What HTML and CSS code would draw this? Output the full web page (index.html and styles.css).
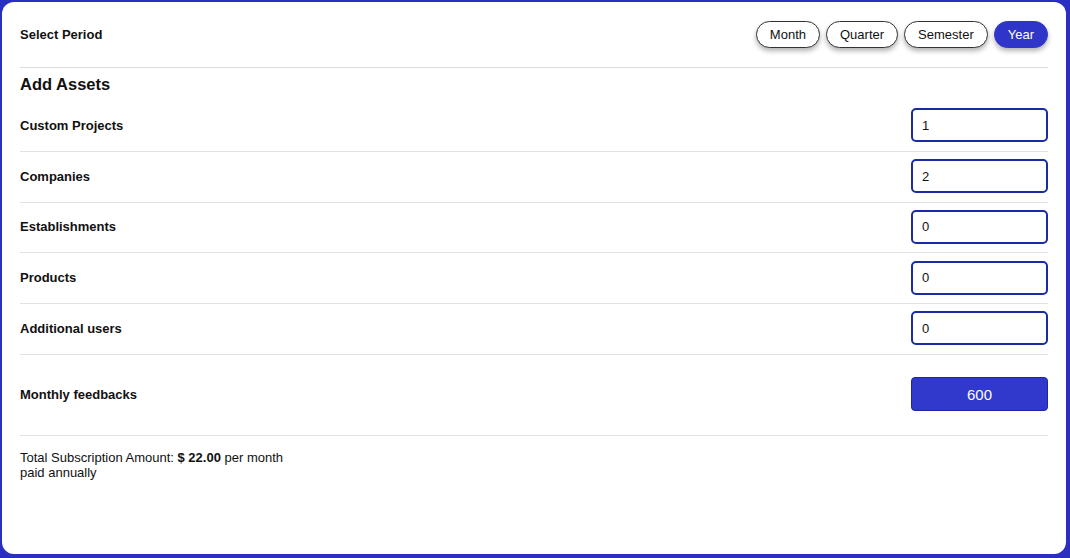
FILE: index.html
```html
<!DOCTYPE html>
<html>
<head>
<meta charset="utf-8">
<link rel="stylesheet" href="styles.css">
</head>
<body>
<div class="card">
  <div class="header">
    <div class="label">Select Period</div>
    <div class="periods">
      <button class="pill">Month</button>
      <button class="pill">Quarter</button>
      <button class="pill">Semester</button>
      <button class="pill active">Year</button>
    </div>
  </div>
  <div class="section-title">Add Assets</div>
  <div class="row"><div class="label">Custom Projects</div><input class="field" value="1"></div>
  <div class="row"><div class="label">Companies</div><input class="field" value="2"></div>
  <div class="row"><div class="label">Establishments</div><input class="field" value="0"></div>
  <div class="row"><div class="label">Products</div><input class="field" value="0"></div>
  <div class="row"><div class="label">Additional users</div><input class="field" value="0"></div>
  <div class="row feedback"><div class="label">Monthly feedbacks</div><button class="feedback-btn">600</button></div>
  <div class="total">Total Subscription Amount: <b>$ 22.00</b> per month<br>paid annually</div>
</div>
</body>
</html>
```
FILE: styles.css
```css
* { box-sizing: border-box; }
html, body { margin: 0; padding: 0; }
body {
  background: #2a2fc2;
  font-family: "Liberation Sans", Arial, sans-serif;
  color: #111;
  width: 1070px;
  height: 558px;
  overflow: hidden;
}
.card {
  margin: 2px 4px 0 2px;
  height: 552px;
  background: #fff;
  border-radius: 12px;
  padding: 0 18px;
}
.header {
  height: 66px;
  display: flex;
  align-items: center;
  justify-content: space-between;
  border-bottom: 1px solid #dcdcdc;
  padding-bottom: 1px;
}
.label {
  font-size: 13px;
  font-weight: bold;
}
.periods {
  display: flex;
  gap: 6px;
}
.pill {
  height: 27px;
  padding: 0 13px;
  border: 1px solid #333;
  border-radius: 14px;
  background: #fff;
  font-family: "Liberation Sans", Arial, sans-serif;
  font-size: 13px;
  color: #111;
  box-shadow: 0 3px 5px rgba(0,0,0,0.3);
}
.pill.active {
  background: #2f35c9;
  border-color: #2f35c9;
  color: #fff;
}
.section-title {
  height: 33px;
  display: flex;
  align-items: center;
  font-size: 16.5px;
  font-weight: bold;
}
.row {
  height: 50.75px;
  display: flex;
  align-items: center;
  justify-content: space-between;
  border-bottom: 1px solid #e2e2e2;
  padding-bottom: 1px;
}
.field {
  width: 137px;
  height: 34px;
  border: 2px solid #1a2ca3;
  border-radius: 5px;
  padding: 0 0 0 9px;
  font-family: "Liberation Sans", Arial, sans-serif;
  font-size: 13px;
  color: #111;
  outline: none;
}
.row.feedback {
  height: 81px;
  padding-bottom: 1px;
}
.feedback-btn {
  width: 137px;
  height: 34px;
  background: #3139cc;
  border: 1px solid #1e26a6;
  border-radius: 4px;
  color: #fff;
  font-family: "Liberation Sans", Arial, sans-serif;
  font-size: 15px;
}
.total {
  padding-top: 14px;
  font-size: 13px;
  line-height: 15px;
}
```
